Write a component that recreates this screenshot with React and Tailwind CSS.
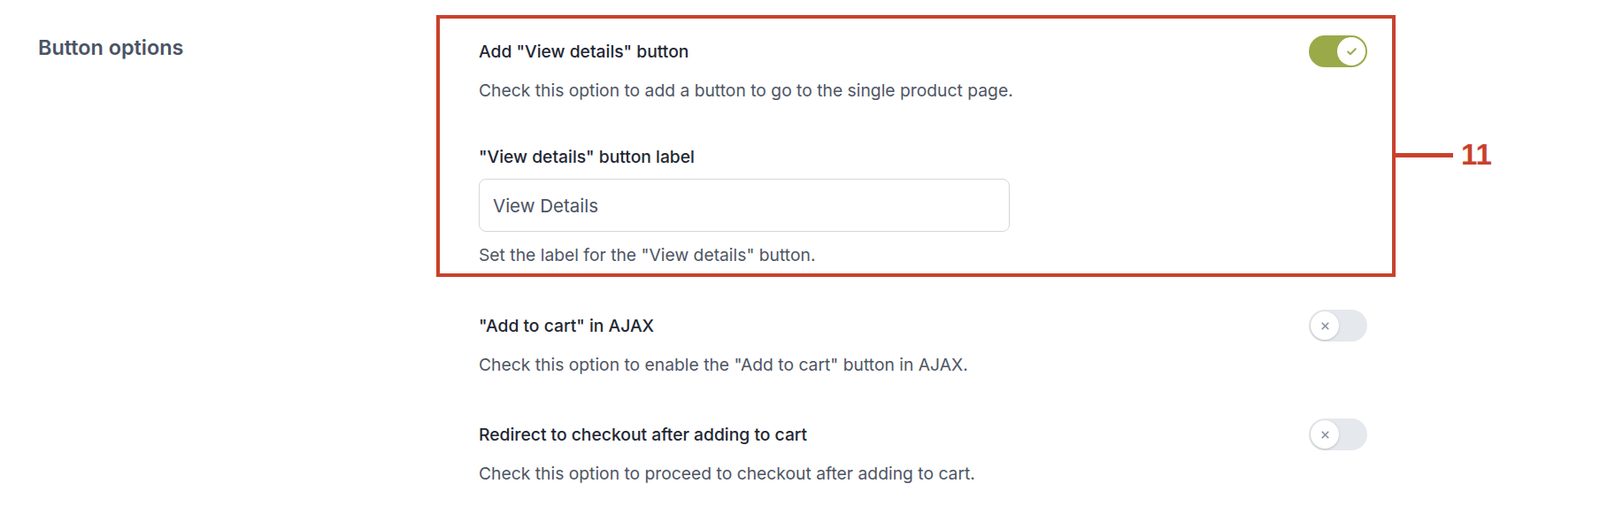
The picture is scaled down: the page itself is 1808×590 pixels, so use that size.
import { Check, X } from "lucide-react";

function Toggle({ on }) {
  if (on) {
    return (
      <div className="-my-1 flex h-[36px] w-[66px] shrink-0 items-center justify-end rounded-full bg-[#9aaa49] p-[2px]">
        <div className="flex h-[32px] w-[32px] items-center justify-center rounded-full bg-white">
          <Check className="h-[13px] w-[13px] text-[#9aaa49]" strokeWidth={3.5} />
        </div>
      </div>
    );
  }
  return (
    <div className="-my-1 flex h-[36px] w-[66px] shrink-0 items-center justify-start rounded-full bg-[#e5e8ec] p-[2px]">
      <div className="flex h-[32px] w-[32px] items-center justify-center rounded-full bg-white shadow-[0_1px_3px_rgba(0,0,0,0.18)]">
        <X className="h-[13px] w-[13px] text-[#8a93a2]" strokeWidth={3.2} />
      </div>
    </div>
  );
}

function OptionRow({ title, description, on }) {
  return (
    <div>
      <div className="flex h-7 items-center justify-between">
        <span className="text-[19.3px] font-medium leading-7 text-[#1f2733]">{title}</span>
        <Toggle on={on} />
      </div>
      <p className="mt-4 text-[19.3px] leading-7 text-[#4f5664]">{description}</p>
    </div>
  );
}

export default function App() {
  return (
    <div className="flex h-[590px] w-[1808px] bg-white font-['Inter',sans-serif]">
      <div className="w-[493px] shrink-0 pl-[43px] pt-[38px]">
        <h2 className="text-[23.4px] font-semibold leading-8 text-[#4a5466]">Button options</h2>
      </div>

      <div className="w-[1084px] shrink-0 pt-[17px]">
        <div className="relative border-4 border-[#c9412c] pb-[7px] pl-[44px] pr-[28px] pt-[23px]">
          <OptionRow
            title={'Add "View details" button'}
            description="Check this option to add a button to go to the single product page."
            on
          />
          <label className="mt-[47px] block text-[19.3px] font-medium leading-7 text-[#1f2733]">
            "View details" button label
          </label>
          <input
            readOnly
            value="View Details"
            className="mt-[11px] block h-[60px] w-[600px] rounded-lg border border-[#d3d7dd] bg-white px-[15px] text-[20.5px] text-[#4b5363] outline-none"
          />
          <p className="mt-3 text-[19.3px] leading-7 text-[#4f5664]">Set the label for the "View details" button.</p>

          <div className="absolute left-[calc(100%+4px)] top-[134px] flex h-10 items-center">
            <div className="h-[5px] w-[65px] bg-[#c9412c]" />
            <span className="ml-[9px] font-['Liberation_Sans',sans-serif] text-[33px] font-bold leading-10 text-[#c9412c]">
              11
            </span>
          </div>
        </div>

        <div className="mt-[41px] pl-[48px] pr-[32px]">
          <OptionRow
            title={'"Add to cart" in AJAX'}
            description={'Check this option to enable the "Add to cart" button in AJAX.'}
          />
        </div>
        <div className="mt-[51px] pl-[48px] pr-[32px]">
          <OptionRow
            title="Redirect to checkout after adding to cart"
            description="Check this option to proceed to checkout after adding to cart."
          />
        </div>
      </div>
    </div>
  );
}
